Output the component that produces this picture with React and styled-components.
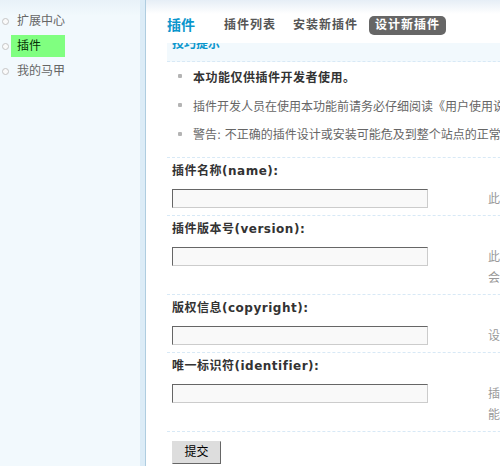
import React, { useLayoutEffect, useRef } from "react";
import styled, { createGlobalStyle } from "styled-components";

const GlobalStyle = createGlobalStyle`
  html, body {
    margin: 0;
    padding: 0;
    overflow: hidden;
  }
  body {
    font-family: "DejaVu Sans", "Noto Sans CJK SC", sans-serif;
    font-size: 12px;
    color: #333;
    background: #fff;
  }
  #root {
    height: 466px;
  }
`;

const Page = styled.div`
  display: flex;
  height: 466px;
  overflow: hidden;
`;

/* ---------- left menu ---------- */
const Sidebar = styled.nav`
  width: 140px;
  flex: none;
  box-sizing: border-box;
  padding-top: 10px;
  background: linear-gradient(to bottom, #e8f1f8 0, #f2f9fd 16px);
`;

const MenuList = styled.ul`
  list-style: none;
  margin: 0;
  padding: 0;
`;

const MenuItem = styled.li`
  display: flex;
  align-items: center;
  height: 22px;
  margin-bottom: 3px;
  padding-left: 2px;
`;

const MenuDot = styled.span`
  width: 5px;
  height: 5px;
  border: 1px solid #c4c4c4;
  border-radius: 50%;
  background: #fafafa;
  margin-right: 2px;
  flex: none;
`;

const MenuLink = styled.a`
  display: block;
  width: 48px;
  padding-left: 6px;
  line-height: 22px;
  text-decoration: none;
  white-space: nowrap;
  color: ${(p) => (p.$active ? "#053005" : "#666")};
  background: ${(p) => (p.$active ? "#80ff80" : "transparent")};
`;

const Divider = styled.div`
  width: 5px;
  flex: none;
  background: #dcecf7;
  border-right: 1px solid #afcde0;
`;

/* ---------- main frame ---------- */
const Main = styled.main`
  flex: 1;
  min-width: 0;
  display: flex;
  flex-direction: column;
  overflow: hidden;
  background: #fff;
`;

const Header = styled.header`
  flex: none;
  height: 43px;
  box-sizing: border-box;
  display: flex;
  align-items: flex-start;
  padding: 16px 0 0 21px;
  background: linear-gradient(to bottom, #e6eef6 0, #ffffff 14px);
`;

const Title = styled.h1`
  margin: 0 23px 0 0;
  font-size: 14px;
  line-height: 19px;
  font-weight: bold;
  color: #0a96cc;
  white-space: nowrap;
`;

const Tabs = styled.div`
  display: flex;
`;

const Tab = styled.a`
  display: block;
  padding: 0 6px;
  margin-right: 5px;
  line-height: 19px;
  font-weight: bold;
  letter-spacing: 1px;
  white-space: nowrap;
  border-radius: 5px;
  text-decoration: none;
  color: ${(p) => (p.$active ? "#fff" : "#555")};
  background: ${(p) => (p.$active ? "#666" : "transparent")};
`;

const Scroller = styled.div`
  flex: 1;
  overflow: hidden;
`;

const Content = styled.div`
  width: 820px;
  padding: 0 0 24px 21px;
`;

/* ---------- tips ---------- */
const TipTitle = styled.div`
  height: 32px;
  line-height: 30px;
  padding-left: 5px;
  font-weight: bold;
  color: #0a96cc;
  background: #f2f9fd;
  border-bottom: 1px dashed #d8e9f6;
`;

const TipList = styled.ul`
  list-style: none;
  margin: 0;
  padding: 0 0 9px;
  border-bottom: 1px dashed #d8e9f6;
`;

const TipItem = styled.li`
  display: flex;
  align-items: center;
  height: 28.7px;
  padding-left: 11px;
  white-space: nowrap;
  color: ${(p) => (p.$strong ? "#333" : "#666")};
  font-weight: ${(p) => (p.$strong ? "bold" : "normal")};
  letter-spacing: ${(p) => (p.$strong ? "0.5px" : "0")};

  &::before {
    content: "";
    width: 4px;
    height: 4px;
    border-radius: 1px;
    background: #b4b4b4;
    margin-right: 11px;
    flex: none;
  }
`;

/* ---------- form ---------- */
const Section = styled.div`
  border-bottom: 1px dashed #d8e9f6;
`;

const Label = styled.div`
  line-height: 26px;
  padding-left: 5px;
  font-weight: bold;
  letter-spacing: 0.5px;
  color: #333;
  white-space: nowrap;
`;

const FieldRow = styled.div`
  display: flex;
  align-items: flex-start;
  padding: 5px 0 5px;
`;

const FieldCell = styled.div`
  width: 315px;
  flex: none;
  padding-left: 5px;
  box-sizing: border-box;
`;

const TextInput = styled.input`
  display: block;
  width: 256px;
  height: 19px;
  box-sizing: border-box;
  margin: 0;
  padding: 0 3px;
  border: 1px solid;
  border-color: #666 #ccc #ccc #666;
  background: #f9f9f9;
  font: inherit;
  outline: none;
`;

const Hint = styled.div`
  padding-left: 6px;
  line-height: 21px;
  color: #999;
  white-space: nowrap;
`;

const SubmitRow = styled.div`
  padding: 9px 0 0 5px;
`;

const SubmitButton = styled.button`
  width: 49px;
  height: 23px;
  margin: 0;
  padding: 0;
  border: 1px solid;
  border-color: #ddd #666 #666 #ddd;
  background: #ddd;
  color: #000;
  font-family: inherit;
  font-size: 12px;
  line-height: 21px;
`;

const menu = [
  { label: "扩展中心" },
  { label: "插件", active: true },
  { label: "我的马甲" },
];

const tabs = [
  { label: "插件列表" },
  { label: "安装新插件" },
  { label: "设计新插件", active: true },
];

const tips = [
  { text: "本功能仅供插件开发者使用。", strong: true },
  { text: "插件开发人员在使用本功能前请务必仔细阅读《用户使用说明书》中插件开发的相关说明。" },
  { text: "警告: 不正确的插件设计或安装可能危及到整个站点的正常使用，请谨慎操作。" },
];

const fields = [
  {
    name: "name",
    label: "插件名称(name):",
    hint: ["此插件的名称，中英文均可，最多 40 个字节"],
  },
  {
    name: "version",
    label: "插件版本号(version):",
    hint: ["此插件的版本号，最多 20 个字节，版本号变更后", "会在插件列表中提示站长进行升级"],
  },
  {
    name: "copyright",
    label: "版权信息(copyright):",
    hint: ["设置插件的版权信息，最多 100 个字节"],
  },
  {
    name: "identifier",
    label: "唯一标识符(identifier):",
    hint: ["插件的唯一标识符，不得与其他插件重复，只", "能使用英文字母、数字和下划线"],
  },
];

export default function App() {
  const scrollRef = useRef(null);

  useLayoutEffect(() => {
    if (scrollRef.current) scrollRef.current.scrollTop = 14;
  }, []);

  return (
    <>
      <GlobalStyle />
      <Page>
        <Sidebar>
          <MenuList>
            {menu.map((m) => (
              <MenuItem key={m.label}>
                <MenuDot />
                <MenuLink href="#" $active={m.active}>
                  {m.label}
                </MenuLink>
              </MenuItem>
            ))}
          </MenuList>
        </Sidebar>
        <Divider />
        <Main>
          <Header>
            <Title>插件</Title>
            <Tabs>
              {tabs.map((t) => (
                <Tab key={t.label} href="#" $active={t.active}>
                  {t.label}
                </Tab>
              ))}
            </Tabs>
          </Header>
          <Scroller ref={scrollRef}>
            <Content>
              <TipTitle>技巧提示</TipTitle>
              <TipList>
                {tips.map((t, i) => (
                  <TipItem key={i} $strong={t.strong}>
                    {t.text}
                  </TipItem>
                ))}
              </TipList>
              <form onSubmit={(e) => e.preventDefault()}>
                {fields.map((f) => (
                  <Section key={f.name}>
                    <Label>{f.label}</Label>
                    <FieldRow>
                      <FieldCell>
                        <TextInput type="text" name={f.name} />
                      </FieldCell>
                      <Hint>
                        {f.hint.map((line, i) => (
                          <div key={i}>{line}</div>
                        ))}
                      </Hint>
                    </FieldRow>
                  </Section>
                ))}
                <SubmitRow>
                  <SubmitButton type="submit">提交</SubmitButton>
                </SubmitRow>
              </form>
            </Content>
          </Scroller>
        </Main>
      </Page>
    </>
  );
}
